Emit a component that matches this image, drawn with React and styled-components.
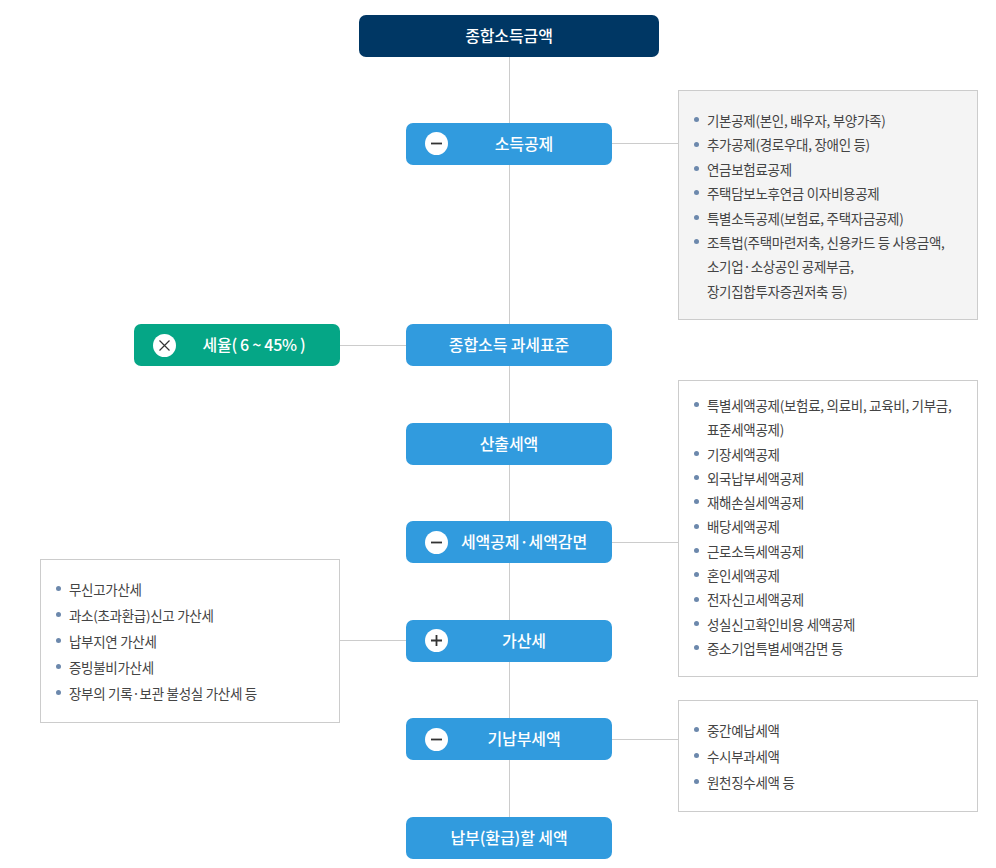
import React from "react";
import styled, { createGlobalStyle } from "styled-components";

const Global = createGlobalStyle`
  html, body { margin: 0; padding: 0; background: #fff; }
  body { font-family: "Noto Sans CJK KR", "Noto Sans", sans-serif; }
  ul { margin: 0; padding: 0; list-style: none; }
`;

const Chart = styled.div`
  display: grid;
  grid-template-columns: 300px 300px 300px;
  column-gap: 19px;
  padding: 15px 18px 9px 40px;
  width: 996px;
  height: 868px;
  box-sizing: border-box;
`;

const Column = styled.div`
  display: flex;
  flex-direction: column;
  align-items: ${(p) => p.$align || "stretch"};
  position: relative;
`;

const Trunk = styled.div`
  position: absolute;
  left: 150px;
  top: 42px;
  width: 1px;
  height: 760px;
  background: #ccc;
`;

const Node = styled.div`
  position: relative;
  box-sizing: border-box;
  width: ${(p) => p.$width || 206}px;
  height: 42px;
  margin-top: ${(p) => p.$top || 0}px;
  padding-left: ${(p) => p.$inset || 0}px;
  padding-bottom: 2px;
  display: flex;
  align-items: center;
  justify-content: center;
  flex: none;
  align-self: ${(p) => p.$self || "auto"};
  border-radius: 7px;
  background: ${(p) => p.$color || "#319bde"};
  color: #fff;
  font-size: 16px;
  font-weight: 500;
  letter-spacing: ${(p) => p.$track ?? -0.1}px;
  white-space: pre;
  &::after {
    content: ${(p) => (p.$branch ? '""' : "none")};
    position: absolute;
    top: 20.6px;
    ${(p) => (p.$branch === "left" ? "right: 100%;" : "left: 100%;")}
    width: 66px;
    height: 1px;
    background: #ccc;
  }
`;

const Badge = styled.span`
  position: absolute;
  left: 19px;
  top: 9.5px;
  width: 23px;
  height: 23px;
  border-radius: 50%;
  background: #fff;
  display: flex;
  align-items: center;
  justify-content: center;
`;

const Panel = styled.div`
  box-sizing: border-box;
  height: ${(p) => p.$height}px;
  margin-top: ${(p) => p.$top}px;
  padding: ${(p) => p.$pad}px 20px 0 15px;
  border: 1px solid #ccc;
  background: ${(p) => (p.$shaded ? "#f4f4f4" : "#fff")};
`;

const Item = styled.li`
  position: relative;
  padding-left: 13px;
  font-size: 13.5px;
  line-height: ${(p) => p.$line}px;
  letter-spacing: -0.3px;
  color: #444;
  white-space: pre-line;
  &::before {
    content: "";
    position: absolute;
    left: 0;
    top: ${(p) => p.$line / 2 - 3}px;
    width: 5px;
    height: 5px;
    border-radius: 50%;
    background: #6c88ac;
  }
`;

const Sign = ({ type }) => (
  <Badge>
    <svg width="13" height="13" viewBox="0 0 13 13" fill="none" stroke="#333" strokeWidth={type === "x" ? 1.2 : 1.8}>
      {type === "minus" && <path d="M1 6.5h11" />}
      {type === "plus" && <path d="M1 6.5h11M6.5 1v11" />}
      {type === "x" && <path d="M1.5 1.5l10 10M11.5 1.5l-10 10" />}
    </svg>
  </Badge>
);

const List = ({ items, line }) => (
  <ul>
    {items.map((t) => (
      <Item key={t} $line={line}>{t}</Item>
    ))}
  </ul>
);

export default function App() {
  return (
    <Chart>
      <Global />
      <Column>
        <Node $self="flex-end" $color="#05a686" $top={309.4} $inset={34} $track={-0.3}>
          <Sign type="x" />세율( 6 ~ 45% )
        </Node>
        <Panel $top={192.6} $height={164} $pad={16}>
          <List
            line={26}
            items={["무신고가산세", "과소(초과환급)신고 가산세", "납부지연 가산세", "증빙불비가산세", "장부의 기록·보관 불성실 가산세 등"]}
          />
        </Panel>
      </Column>
      <Column $align="center">
        <Trunk />
        <Node $width={300} $color="#003764">종합소득금액</Node>
        <Node $top={65.8} $inset={30} $branch="right"><Sign type="minus" />소득공제</Node>
        <Node $top={159.6} $branch="left">종합소득 과세표준</Node>
        <Node $top={56.43}>산출세액</Node>
        <Node $top={56.43} $inset={30} $branch="right"><Sign type="minus" />세액공제·세액감면</Node>
        <Node $top={56.43} $inset={30} $branch="left"><Sign type="plus" />가산세</Node>
        <Node $top={56.43} $inset={30} $branch="right"><Sign type="minus" />기납부세액</Node>
        <Node $top={56.43}>납부(환급)할 세액</Node>
      </Column>
      <Column>
        <Panel $shaded $top={75} $height={230} $pad={17}>
          <List
            line={24.4}
            items={[
              "기본공제(본인, 배우자, 부양가족)",
              "추가공제(경로우대, 장애인 등)",
              "연금보험료공제",
              "주택담보노후연금 이자비용공제",
              "특별소득공제(보험료, 주택자금공제)",
              "조특법(주택마련저축, 신용카드 등 사용금액,\n소기업·소상공인 공제부금,\n장기집합투자증권저축 등)",
            ]}
          />
        </Panel>
        <Panel $top={60} $height={297} $pad={12}>
          <List
            line={24.3}
            items={[
              "특별세액공제(보험료, 의료비, 교육비, 기부금,\n표준세액공제)",
              "기장세액공제",
              "외국납부세액공제",
              "재해손실세액공제",
              "배당세액공제",
              "근로소득세액공제",
              "혼인세액공제",
              "전자신고세액공제",
              "성실신고확인비용 세액공제",
              "중소기업특별세액감면 등",
            ]}
          />
        </Panel>
        <Panel $top={23} $height={112} $pad={16}>
          <List line={26} items={["중간예납세액", "수시부과세액", "원천징수세액 등"]} />
        </Panel>
      </Column>
    </Chart>
  );
}
